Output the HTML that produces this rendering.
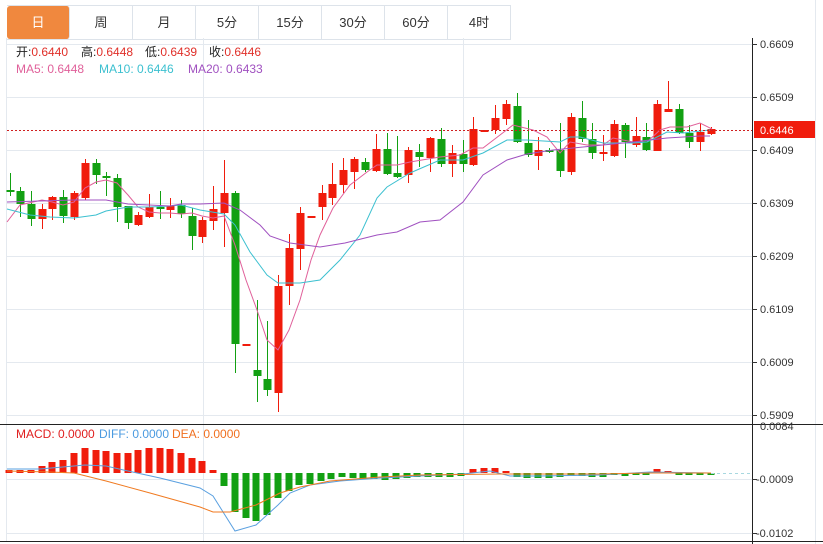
<!DOCTYPE html>
<html><head><meta charset="utf-8"><style>
body{margin:0;width:823px;height:544px;background:#fff;overflow:hidden;font-family:"Liberation Sans","Noto Sans CJK SC",sans-serif}
.tabs{position:absolute;left:7px;top:5px;height:33px;display:flex;border-top:1px solid #dde3ea;border-bottom:1px solid #dde3ea}
.tabs div{width:62px;border-right:1px solid #dde3ea;text-align:center;line-height:33px;font-size:13px;color:#333}
.tabs div.on{background:#f0883e;color:#fff;border-radius:3px}
svg{position:absolute;left:0;top:0}
</style></head><body>
<div class="tabs"><div class="on">日</div><div>周</div><div>月</div><div>5分</div><div>15分</div><div>30分</div><div>60分</div><div>4时</div></div>
<svg id="s" width="823" height="544" xmlns="http://www.w3.org/2000/svg" font-family="Liberation Sans, Noto Sans CJK SC, sans-serif">
<g stroke="#e4e9ef" stroke-width="1">
<line x1="7" y1="44.5" x2="752" y2="44.5"/><line x1="7" y1="97.5" x2="752" y2="97.5"/><line x1="7" y1="150.5" x2="752" y2="150.5"/><line x1="7" y1="203.5" x2="752" y2="203.5"/><line x1="7" y1="256.5" x2="752" y2="256.5"/><line x1="7" y1="309.5" x2="752" y2="309.5"/><line x1="7" y1="362.5" x2="752" y2="362.5"/><line x1="7" y1="415.5" x2="752" y2="415.5"/>
<line x1="7" y1="479.5" x2="752" y2="479.5"/><line x1="7" y1="533.5" x2="752" y2="533.5"/>
<line x1="203.5" y1="38" x2="203.5" y2="542"/><line x1="463.5" y1="38" x2="463.5" y2="542"/>
<line x1="6.5" y1="38" x2="6.5" y2="542"/><line x1="815.5" y1="0" x2="815.5" y2="544"/>
</g>
<line x1="0" y1="424.5" x2="823" y2="424.5" stroke="#222"/>
<line x1="0" y1="541.5" x2="823" y2="541.5" stroke="#222"/>
<line x1="752.5" y1="38" x2="752.5" y2="544" stroke="#222"/>
<g id="c"></g>
<line x1="7" y1="130.5" x2="752" y2="130.5" stroke="#d02020" stroke-dasharray="2,2"/>
<line x1="711" y1="473.5" x2="752" y2="473.5" stroke="#a8d8e0" stroke-dasharray="3,3"/>
<rect x="754" y="121" width="61" height="17" fill="#f01c0c"/>
<text x="760" y="134" font-size="11" fill="#fff">0.6446</text>
<g font-size="11" fill="#333">
<text x="760" y="48">0.6609</text><text x="760" y="101">0.6509</text><text x="760" y="154">0.6409</text><text x="760" y="207">0.6309</text><text x="760" y="260">0.6209</text><text x="760" y="313">0.6109</text><text x="760" y="366">0.6009</text><text x="760" y="419">0.5909</text>
<text x="760" y="430">0.0084</text><text x="756" y="483">-0.0009</text><text x="756" y="537">-0.0102</text>
</g>
<g stroke="#333"><line x1="752" y1="44.5" x2="757" y2="44.5"/><line x1="752" y1="97.5" x2="757" y2="97.5"/><line x1="752" y1="150.5" x2="757" y2="150.5"/><line x1="752" y1="203.5" x2="757" y2="203.5"/><line x1="752" y1="256.5" x2="757" y2="256.5"/><line x1="752" y1="309.5" x2="757" y2="309.5"/><line x1="752" y1="362.5" x2="757" y2="362.5"/><line x1="752" y1="415.5" x2="757" y2="415.5"/><line x1="752" y1="479.5" x2="757" y2="479.5"/><line x1="752" y1="533.5" x2="757" y2="533.5"/></g>
<g font-size="12">
<text x="16" y="56" fill="#222">开:<tspan fill="#e0302a">0.6440</tspan></text>
<text x="81" y="56" fill="#222">高:<tspan fill="#e0302a">0.6448</tspan></text>
<text x="145" y="56" fill="#222">低:<tspan fill="#e0302a">0.6439</tspan></text>
<text x="209" y="56" fill="#222">收:<tspan fill="#e0302a">0.6446</tspan></text>
<text x="16" y="73" fill="#e0609a">MA5: 0.6448</text><text x="99" y="73" fill="#3cc0d0">MA10: 0.6446</text><text x="188" y="73" fill="#a050c0">MA20: 0.6433</text>
<text x="16" y="438" fill="#e02020">MACD: 0.0000</text><text x="99" y="438" fill="#4a9ae0">DIFF: 0.0000</text><text x="172" y="438" fill="#f07020">DEA: 0.0000</text>
</g>
</svg>
<script>
var R="#f01c0c",G="#12a012";
var C=[[10,'g',190,191,173,196],[20,'g',191,204,187,217],[31,'g',204,219,191,226],[42,'r',209,219,204,229],[52,'r',197,209,196,220],[63,'g',197,216,190,223],[74,'r',193,217,191,220],[85,'r',163,198,159,200],[96,'g',163,175,159,184],[106,'g',176,178,172,196],[117,'g',178,207,174,222],[128,'g',206,223,206,229],[138,'r',215,225,212,226],[149,'r',207,217,194,218],[160,'g',207,209,191,219],[170,'r',206,210,198,218],[181,'g',205,214,200,218],[192,'g',216,236,208,250],[202,'r',220,237,217,243],[213,'r',209,221,186,230],[224,'r',193,213,160,247],[235,'g',193,344,191,373],[246,'r',344,345,344,345],[257,'g',370,376,300,402],[267,'g',379,390,321,396],[278,'r',286,393,275,412],[289,'r',248,286,234,305],[300,'r',213,249,207,270],[311,'r',216,217,216,217],[322,'r',193,207,185,220],[332,'r',184,198,163,205],[343,'r',170,185,158,193],[354,'r',159,172,157,189],[365,'g',162,170,158,172],[376,'r',149,171,134,172],[387,'g',149,174,133,175],[397,'g',173,177,136,178],[408,'r',150,175,147,183],[419,'g',152,157,144,167],[430,'r',138,158,137,172],[441,'g',139,164,128,167],[452,'r',153,164,145,177],[463,'g',154,164,140,172],[473,'r',129,165,117,166],[484,'r',130,131,130,131],[495,'r',118,130,105,134],[506,'r',104,119,100,125],[517,'g',106,142,93,143],[528,'g',143,155,120,157],[538,'r',150,156,137,170],[549,'g',150,151,148,153],[560,'g',150,171,123,177],[571,'r',117,172,113,175],[582,'g',118,139,101,142],[592,'g',139,153,123,159],[603,'r',152,153,135,161],[614,'r',124,156,120,157],[625,'g',125,142,123,158],[636,'r',136,145,117,147],[646,'g',137,150,123,151],[657,'r',104,151,100,151],[668,'r',109,112,81,112],[679,'g',109,133,104,134],[689,'g',133,142,125,148],[700,'r',132,142,123,151],[711,'r',129,134,127,135]];
var h='';
C.forEach(function(c){var col=c[1]=='r'?R:G;h+='<line x1="'+(c[0]+.5)+'" y1="'+c[4]+'" x2="'+(c[0]+.5)+'" y2="'+c[5]+'" stroke="'+col+'"/>';var bh=Math.max(2,c[3]-c[2]);h+='<rect x="'+(c[0]-3.5)+'" y="'+c[2]+'" width="8" height="'+bh+'" fill="'+col+'"/>';});
function pl(p,col){return '<polyline fill="none" stroke="'+col+'" stroke-width="1" points="'+p+'"/>';}
h+=pl("7,222 20,205 42,200 52,202 63,205 74,202 85,188 96,182 106,180 117,183 128,195 138,207 149,212 160,213 170,213 181,214 192,213 202,216 213,218 224,216 235,245 246,280 257,310 267,340 278,350 289,330 300,300 311,260 320,235 333,208 350,185 367,172 377,165 397,165 410,162 440,157 460,155 473,148 483,148 500,135 513,125 533,130 547,137 560,153 570,142 587,145 603,145 613,138 633,142 647,142 660,130 670,127 687,127 700,123 712,129","#e0609a");
h+=pl("7,209 30,215 50,217 74,218 96,215 106,211 128,207 150,207 170,206 181,205 200,210 224,214 235,225 250,252 267,275 278,283 300,283 320,280 340,260 360,235 377,198 387,187 410,173 440,160 463,160 483,153 507,140 527,140 560,142 570,137 580,137 603,143 633,143 647,142 667,132 683,133 710,130","#3cc0d0");
h+=pl("7,202 40,201 74,200 106,200 128,204 170,206 181,204 200,204 224,203 240,210 260,225 270,236 290,243 320,247 345,243 377,235 397,232 420,222 440,220 463,202 483,175 507,160 527,154 553,150 583,147 603,145 633,142 667,138 700,136 710,136","#a050c0");
var M=[[9,470],[20,470],[31,470],[42,466],[52,462],[63,460],[74,453],[85,448],[96,450],[106,451],[117,453],[128,453],[138,450],[149,448],[160,448],[170,449],[181,453],[192,458],[202,461],[213,470],[224,486],[235,512],[246,518],[256,521],[267,515],[278,498],[289,491],[299,485],[310,484],[321,481],[331,479],[342,477],[353,478],[363,479],[374,479],[385,480],[396,479],[407,478],[417,477],[428,477],[439,477],[450,477],[461,476],[473,469],[484,468],[495,468],[506,471],[517,477],[527,478],[538,478],[549,478],[560,477],[571,476],[582,476],[592,477],[603,477],[614,475],[625,476],[636,475],[646,475],[657,469],[668,471],[679,474],[689,475],[700,474],[711,474]];
var z=473;M.forEach(function(m){var col=m[1]<z?R:G;var y=Math.min(m[1],z),hh=Math.max(2,Math.abs(m[1]-z));h+='<rect x="'+(m[0]-3.5)+'" y="'+y+'" width="7" height="'+hh+'" fill="'+col+'"/>';});
h+=pl("7,469 40,469 74,466 85,465 106,466 128,471 160,478 200,488 213,496 235,531 256,525 267,515 278,505 290,493 310,485 340,481 380,478 420,476 463,474 490,471 510,476 540,476 600,475 650,472 711,473","#5aa0e0");
h+=pl("7,471 50,472 74,473 106,481 150,493 200,507 213,512 230,512 256,505 280,493 300,487 330,481 380,477 420,475 500,474 600,474 650,473 711,473","#f07a20");
document.getElementById('c').innerHTML=h;
</script>
</body></html>
